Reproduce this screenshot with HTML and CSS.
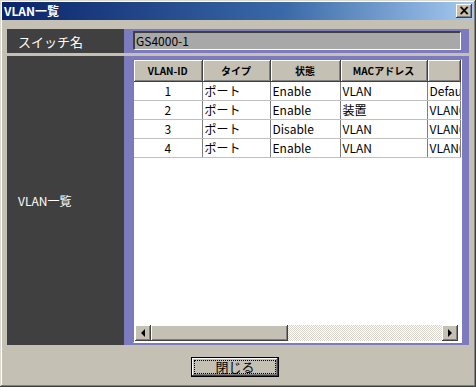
FILE: index.html
```html
<!DOCTYPE html>
<html lang="ja">
<head>
  <meta charset="UTF-8">
  <title>VLAN一覧</title>
  <link rel="stylesheet" href="styles.css">
</head>
<body>
  <div class="window">
    <div class="titlebar">
      <span class="title">VLAN一覧</span>
      <span class="close">×</span>
    </div>

    <div class="content">
      <div class="row row-name">
        <div class="label">スイッチ名</div>
        <div class="value value-name">
          <div class="field">GS4000-1</div>
        </div>
      </div>

      <div class="row row-list">
        <div class="label label-small">VLAN一覧</div>
        <div class="value value-list">
          <div class="grid">
            <table class="vlan-table">
              <colgroup>
                <col class="c-id">
                <col class="c-type">
                <col class="c-state">
                <col class="c-mac">
                <col class="c-name">
              </colgroup>
              <thead>
                <tr>
                  <th>VLAN-ID</th>
                  <th>タイプ</th>
                  <th>状態</th>
                  <th>MACアドレス</th>
                  <th></th>
                </tr>
              </thead>
              <tbody>
                <tr><td class="num">1</td><td>ポート</td><td>Enable</td><td>VLAN</td><td>Default</td></tr>
                <tr><td class="num">2</td><td>ポート</td><td>Enable</td><td>装置</td><td>VLAN0002</td></tr>
                <tr><td class="num">3</td><td>ポート</td><td>Disable</td><td>VLAN</td><td>VLAN0003</td></tr>
                <tr><td class="num">4</td><td>ポート</td><td>Enable</td><td>VLAN</td><td>VLAN0004</td></tr>
              </tbody>
            </table>
            <div class="filler"></div>
            <div class="hscroll">
              <div class="sb-btn"><span class="arrow arrow-left"></span></div>
              <div class="sb-thumb"></div>
              <div class="sb-track"></div>
              <div class="sb-btn"><span class="arrow arrow-right"></span></div>
            </div>
          </div>
        </div>
      </div>
    </div>

    <div class="actions">
      <button class="button"><span class="focus">閉じる</span></button>
    </div>
  </div>
</body>
</html>
```

FILE: styles.css
```css
body {
  margin: 0;
  font-family: "Noto Sans CJK JP", "DejaVu Sans", sans-serif;
  font-size: 12px;
  background-color: #c4c0b4;
}

.window {
  width: 476px;
  height: 387px;
  box-sizing: border-box;
  padding: 2px;
  background-color: #c4c0b4;
  box-shadow: inset -1px -1px #404040, inset 1px 1px #dcd9d0, inset -2px -2px #808080, inset 2px 2px #fff;
  display: flex;
  flex-direction: column;
}

.titlebar {
  height: 18px;
  display: flex;
  align-items: center;
  justify-content: space-between;
  padding: 0 2px 0 2px;
  background: linear-gradient(to right, #0a246a, #3a6aa8 60%, #a6caf0);
}

.title {
  color: #fff;
  font-weight: bold;
  font-size: 12px;
  line-height: 18px;
}

.close {
  width: 16px;
  height: 14px;
  box-sizing: border-box;
  background-color: #c4c0b4;
  box-shadow: inset -1px -1px #404040, inset 1px 1px #fff, inset -2px -2px #808080;
  color: #000;
  font-weight: bold;
  font-size: 14px;
  line-height: 13px;
  text-align: center;
  font-family: "DejaVu Sans", sans-serif;
}

.content {
  padding: 9px 0 0 5px;
  display: flex;
  flex-direction: column;
  gap: 3px;
}

.row {
  display: grid;
  grid-template-columns: 117px 345px;
}

.row-name {
  height: 24px;
}

.row-list {
  height: 289px;
}

.label {
  background-color: #404040;
  color: #fff;
  font-size: 13px;
  padding-left: 11px;
  display: flex;
  align-items: center;
}

.label-small {
  font-size: 12px;
}

.value {
  background-color: #7b7bbd;
}

.value-name {
  padding: 2px 8px 3px 9px;
}

.field {
  height: 19px;
  box-sizing: border-box;
  background-color: #a8a8a8;
  border-top: 2px solid #404040;
  border-left: 2px solid #404040;
  border-right: 1px solid #fff;
  border-bottom: 1px solid #fff;
  padding-left: 1px;
  font-size: 12px;
  line-height: 16px;
  color: #000;
}

.value-list {
  padding: 3px 7px 2px 9px;
}

.grid {
  height: 100%;
  box-sizing: border-box;
  background-color: #fff;
  border-top: 1px solid #808080;
  border-left: 1px solid #808080;
  border-right: 1px solid #fff;
  border-bottom: 1px solid #fff;
  display: flex;
  flex-direction: column;
  overflow: hidden;
}

.vlan-table {
  border-collapse: collapse;
  table-layout: fixed;
  width: 326px;
}

.c-id { width: 68px; }
.c-type { width: 68px; }
.c-state { width: 70px; }
.c-mac { width: 87px; }
.c-name { width: 33px; }

.vlan-table th {
  height: 21px;
  padding: 0;
  background-color: #c4c0b4;
  box-shadow: inset 1px 1px #fff, inset -1px -1px #808080;
  border-right: 1px solid #404040;
  border-bottom: 1px solid #404040;
  font-size: 10px;
  font-weight: bold;
  color: #000;
  text-align: center;
}

.vlan-table td {
  height: 18px;
  padding: 0 0 0 2px;
  border-right: 1px solid #808080;
  border-bottom: 1px solid #c0c0c0;
  white-space: nowrap;
  overflow: hidden;
  color: #000;
  line-height: 18px;
}

.vlan-table td.num {
  text-align: center;
  padding: 0;
}

.filler {
  flex: 1;
}

.hscroll {
  height: 16px;
  margin: 0 3px 1px 1px;
  display: flex;
}

.sb-btn {
  width: 16px;
  height: 16px;
  box-sizing: border-box;
  background-color: #c4c0b4;
  box-shadow: inset -1px -1px #404040, inset 1px 1px #fff, inset -2px -2px #808080;
  display: flex;
  align-items: center;
  justify-content: center;
}

.arrow {
  width: 0;
  height: 0;
  border-top: 4px solid transparent;
  border-bottom: 4px solid transparent;
}

.arrow-left {
  border-right: 4px solid #000;
}

.arrow-right {
  border-left: 4px solid #000;
}

.sb-thumb {
  width: 137px;
  height: 16px;
  background-color: #c4c0b4;
  box-shadow: inset -1px -1px #404040, inset 1px 1px #fff, inset -2px -2px #808080;
}

.sb-track {
  flex: 1;
  background: repeating-conic-gradient(#d8d5cc 0 25%, #fff 0 50%) 0 0 / 2px 2px;
}

.actions {
  display: flex;
  justify-content: center;
  padding: 12px 6px 0 0;
}

.button {
  width: 88px;
  height: 20px;
  padding: 2px;
  font-family: "Noto Sans CJK JP", sans-serif;
  font-size: 13px;
  color: #000;
  background-color: #c4c0b4;
  border: 1px solid #000;
  box-shadow: inset -1px -1px #404040, inset 1px 1px #fff, inset -2px -2px #808080;
  display: flex;
}

.focus {
  flex: 1;
  border: 1px dotted #000;
  line-height: 12px;
  text-align: center;
}
```
